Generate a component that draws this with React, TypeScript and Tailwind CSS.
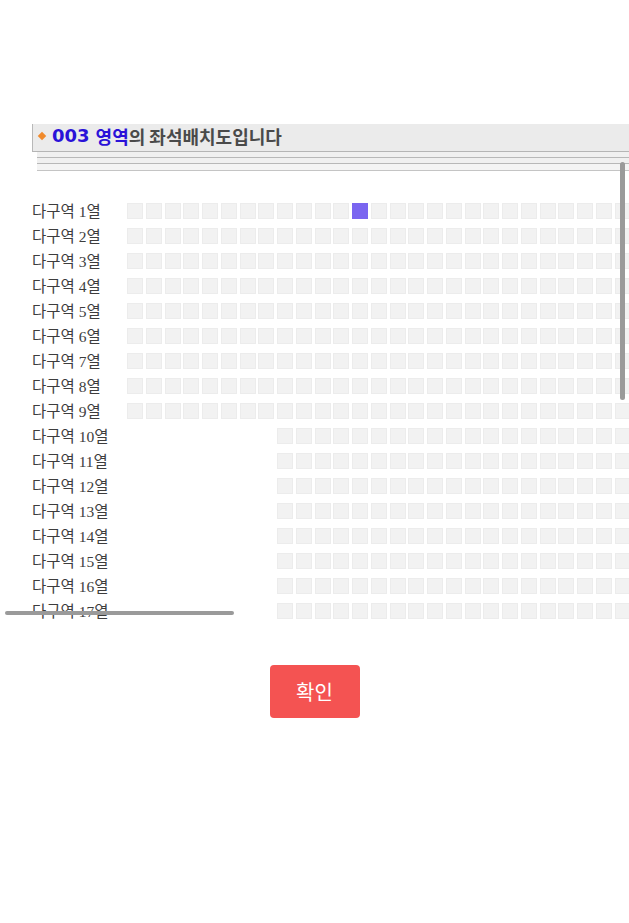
import React from 'react';

const rows = Array.from({ length: 17 }, (_, i) => i + 1);
const SEATS_PER_ROW = 28;

// 좌석 한 칸
const Seat: React.FC<{ picked?: boolean }> = ({ picked }) => (
  <div
    className={
      picked
        ? 'w-4 h-4 shrink-0 bg-[#7a65f0]'
        : 'w-4 h-4 shrink-0 bg-[#f2f2f2] border border-[#ececec]'
    }
  />
);

const App: React.FC = () => {
  return (
    <div className="min-h-screen bg-white pt-[124px] overflow-hidden" style={{ fontFamily: '"Noto Sans CJK KR", sans-serif' }}>
      <div className="relative">
        {/* 헤더 */}
        <div className="pl-[32px]">
          <div className="h-[28px] bg-[#ebebeb] border-l border-[#b8b8b8] border-b border-b-[#b5b5b5] flex items-center pl-[6px] pb-[3px]">
            <span className="w-[6px] h-[6px] bg-[#f08a2c] rotate-45 mr-[7px]" />
            <span className="text-[18px] leading-none font-bold text-[#2a12d8]" style={{ fontFamily: '"DejaVu Sans", "Noto Sans CJK KR", sans-serif' }}>003</span>
            <span className="text-[18px] leading-none font-bold text-[#2a12d8] ml-[6px]">영역</span>
            <span className="text-[18px] leading-none font-semibold text-[#4a4a4a]">의 좌석배치도입니다</span>
          </div>
          <div className="ml-[5px] h-[6px] bg-[#f0f0f0] border-b border-[#b8b8b8]" />
          <div className="ml-[5px] h-[6px] bg-[#f0f0f0] border-b border-[#b8b8b8]" />
          <div className="ml-[5px] h-[7px] bg-[#f4f4f4] border-b border-[#c4c4c4]" />
        </div>

        {/* 좌석 배치도 */}
        <div className="mt-[27px] h-[425px] overflow-hidden pl-[32px]">
          {rows.map((r) => (
            <div key={r} className="h-[25px] flex items-center">
              <div
                className="w-[95px] shrink-0 text-[15.5px] text-[#3d3d3d] leading-none pt-[3px]"
                style={{ fontFamily: '"Liberation Serif", "Noto Sans CJK KR", serif' }}
              >
                다구역 {r}열
              </div>
              <div className={r >= 10 ? 'flex gap-[2.75px] ml-[150px]' : 'flex gap-[2.75px]'}>
                {Array.from({ length: r >= 10 ? SEATS_PER_ROW - 8 : SEATS_PER_ROW }, (_, i) => (
                  <Seat key={i} picked={r === 1 && i === 12} />
                ))}
              </div>
            </div>
          ))}
        </div>

        {/* 스크롤바 */}
        <div className="absolute left-[620px] top-[38px] w-[5px] h-[238px] rounded-full bg-[#9a9a9a]" />
        <div className="absolute left-[5px] top-[487px] w-[229px] h-[4px] rounded-full bg-[#9a9a9a]" />
      </div>

      <div className="flex justify-center mt-[42px]">
        <button className="w-[90px] h-[53px] rounded-[4px] bg-[#f45352] text-white text-[20px]">
          확인
        </button>
      </div>
    </div>
  );
};

export default App;
